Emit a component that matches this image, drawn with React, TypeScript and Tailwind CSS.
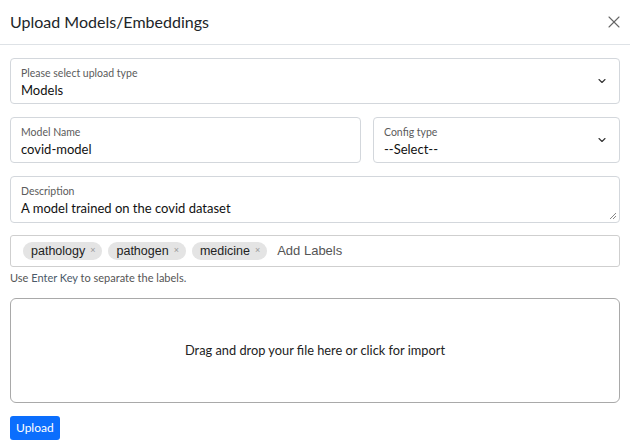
import { ChevronDown, X } from "lucide-react";

const tags = ["pathology", "pathogen", "medicine"];

function Field({ label, value, select = false }: { label: string; value: string; select?: boolean }) {
    return (
        <div className="relative h-[46px] rounded-[4px] border border-[#d3d7dc] bg-white pl-[10px] pt-[7px]">
            <div className="text-[10.5px] leading-[14px] text-[#5b5b5b]">{label}</div>
            <div className="mt-[2px] text-[13px] leading-[17px] text-[#111]">{value}</div>
            {select && (
                <ChevronDown className="absolute right-[11px] top-[16px] h-[12px] w-[12px] text-[#333]" strokeWidth={2.2} />
            )}
        </div>
    );
}

export default function App() {
    return (
        <div className="min-h-screen w-[630px] bg-white font-['Lato',sans-serif] text-[#222]">
            <header className="flex h-[45px] items-center justify-between border-b border-[#dee2e6] pl-[10px] pr-[6px]">
                <h1 className="text-[16px] leading-none text-[#212529]">Upload Models/Embeddings</h1>
                <X className="h-[20px] w-[20px] text-[#666]" strokeWidth={1.3} />
            </header>

            <div className="flex flex-col px-[10px] pt-[13px]">
                <Field label="Please select upload type" value="Models" select />

                <div className="mt-[13px] grid grid-cols-[351px_1fr] gap-[12px]">
                    <Field label="Model Name" value="covid-model" />
                    <Field label="Config type" value="--Select--" select />
                </div>

                <div className="relative mt-[13px] h-[47px] rounded-[4px] border border-[#d3d7dc] pl-[10px] pt-[7px]">
                    <div className="text-[10.5px] leading-[14px] text-[#5b5b5b]">Description</div>
                    <div className="mt-[2px] text-[13px] leading-[17px] text-[#111]">A model trained on the covid dataset</div>
                    <svg className="absolute bottom-[2px] right-[2px]" width="8" height="8" viewBox="0 0 8 8">
                        <path d="M7 1 L1 7 M7 4 L4 7" stroke="#888" strokeWidth="1" />
                    </svg>
                </div>

                <div className="mt-[12px] flex h-[32px] items-center gap-[6px] rounded-[3px] border border-[#cfcfcf] pl-[12px] font-['Liberation_Sans',Arial,sans-serif]">
                    {tags.map((t) => (
                        <span key={t} className="flex h-[18px] items-center gap-[5px] rounded-full bg-[#e4e4e4] pl-[8px] pr-[7px] text-[12.5px] text-[#222]">
                            {t}
                            <span className="text-[9px] text-[#999]">×</span>
                        </span>
                    ))}
                    <span className="ml-[4px] text-[13px] text-[#555]">Add Labels</span>
                </div>
                <p className="mt-[4px] text-[11px] leading-[14px] text-[#555]">
                    Use <span className="text-[#4a5a6a]">Enter Key</span> to separate the labels.
                </p>

                <div className="mt-[13px] flex h-[105px] items-center justify-center rounded-[6px] border border-[#a9a9a9] text-[12.8px] text-[#222]">
                    Drag and drop your file here or click for import
                </div>

                <div className="mt-[13px] flex">
                    <button className="h-[24px] rounded-[3px] bg-[#0b6efd] px-[6px] text-[12px] leading-none text-white">Upload</button>
                </div>
            </div>
        </div>
    );
}
